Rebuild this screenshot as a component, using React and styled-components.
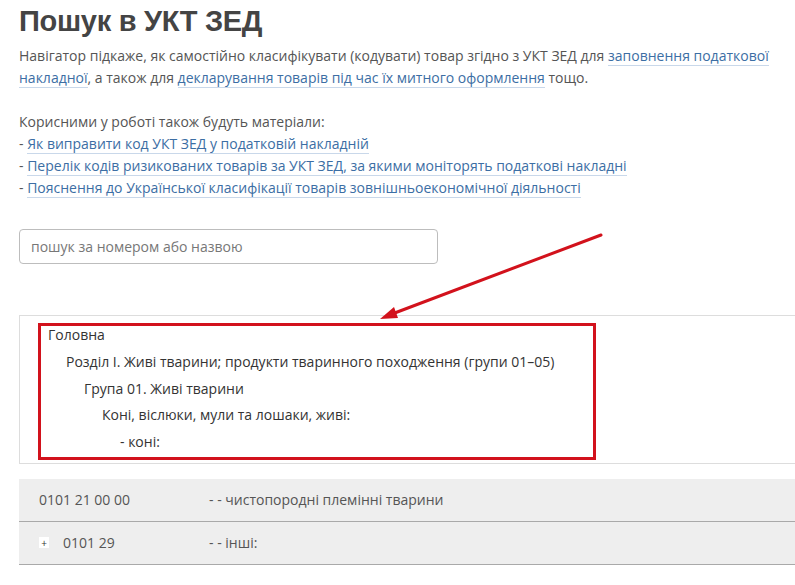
import React from 'react';
import styled, { createGlobalStyle } from 'styled-components';

const Global = createGlobalStyle`
  html, body {
    margin: 0;
    padding: 0;
    background: #fff;
    overflow: hidden;
  }
  body {
    font-family: "Open Sans", "Liberation Sans", sans-serif;
    color: #555;
  }
`;

const Page = styled.div`
  position: relative;
  width: 800px;
  padding: 0 0 0 19px;
  box-sizing: border-box;
`;

const Title = styled.h1`
  margin: 0;
  padding-top: 1px;
  font-family: "Liberation Sans", Arial, sans-serif;
  font-weight: bold;
  font-size: 29px;
  line-height: 40px;
  color: #444;
  letter-spacing: -0.3px;
`;

const Text = styled.p`
  margin: ${(p) => p.$mt || 0}px 0 0;
  width: 760px;
  font-size: 14px;
  line-height: 22px;
  color: #555;
`;

const Link = styled.a`
  color: #3c6ea4;
  text-decoration: none;
  border-bottom: 1px solid #c9d8ea;
`;

const Search = styled.input`
  display: block;
  margin-top: 30px;
  width: 419px;
  height: 35px;
  box-sizing: border-box;
  padding: 0 11px;
  border: 1px solid #bdbdbd;
  border-radius: 4px;
  font-family: "Open Sans", sans-serif;
  font-size: 14px;
  color: #555;
  outline: none;
  &::placeholder {
    color: #777;
  }
`;

const Panel = styled.div`
  margin-top: 51px;
  border: 1px solid #ddd;
  border-right: none;
  padding: 7px 0 3px 18px;
`;

const Crumbs = styled.div`
  width: 545px;
  border: 3px solid #d2121c;
  padding: 0 0 1px 7px;
`;

const Crumb = styled.div`
  padding-left: ${(p) => p.$level * 18}px;
  font-size: 14px;
  line-height: 26.7px;
  color: #333;
  &:first-child {
    line-height: 18px;
    margin-bottom: 5px;
  }
`;

const Table = styled.div`
  margin-top: 15px;
`;

const Row = styled.div`
  display: flex;
  align-items: center;
  height: 42px;
  background: #eee;
  border-bottom: 1px solid #a9a9a9;
  padding-left: 20px;
  font-size: 14px;
  color: #555;
`;

const Code = styled.div`
  display: flex;
  align-items: center;
  width: 170px;
`;

const Plus = styled.span`
  display: inline-flex;
  align-items: center;
  justify-content: center;
  width: 10px;
  height: 11px;
  margin-right: 14px;
  background: #fff;
  font-size: 10px;
  line-height: 1;
  color: #333;
`;

const Arrow = styled.svg`
  position: absolute;
  left: 0;
  top: 0;
  pointer-events: none;
`;

const crumbs = [
  'Головна',
  'Розділ І. Живі тварини; продукти тваринного походження (групи 01–05)',
  'Група 01. Живі тварини',
  'Коні, віслюки, мули та лошаки, живі:',
  '- коні:',
];

export default function App() {
  return (
    <Page>
      <Global />
      <Title>Пошук в УКТ ЗЕД</Title>
      <Text $mt={4}>
        Навігатор підкаже, як самостійно класифікувати (кодувати) товар згідно з УКТ ЗЕД для{' '}
        <Link href="#">заповнення податкової накладної</Link>, а також для{' '}
        <Link href="#">декларування товарів під час їх митного оформлення</Link> тощо.
      </Text>
      <Text $mt={22}>
        Корисними у роботі також будуть матеріали:
        <br />- <Link href="#">Як виправити код УКТ ЗЕД у податковій накладній</Link>
        <br />- <Link href="#">Перелік кодів ризикованих товарів за УКТ ЗЕД, за якими моніторять податкові накладні</Link>
        <br />- <Link href="#">Пояснення до Української класифікації товарів зовнішньоекономічної діяльності</Link>
      </Text>
      <Search placeholder="пошук за номером або назвою" />
      <Panel>
        <Crumbs>
          {crumbs.map((c, i) => (
            <Crumb key={i} $level={i}>{c}</Crumb>
          ))}
        </Crumbs>
      </Panel>
      <Table>
        <Row>
          <Code>0101 21 00 00</Code>
          <div>- - чистопородні племінні тварини</div>
        </Row>
        <Row>
          <Code>
            <Plus>+</Plus>0101 29
          </Code>
          <div>- - інші:</div>
        </Row>
      </Table>
      <Arrow width="800" height="585" viewBox="0 0 800 585">
        <line x1="601" y1="235" x2="392" y2="314" stroke="#d2121c" strokeWidth="3" strokeLinecap="round" />
        <polygon points="380,319 394,307 398,318" fill="#d2121c" />
      </Arrow>
    </Page>
  );
}
